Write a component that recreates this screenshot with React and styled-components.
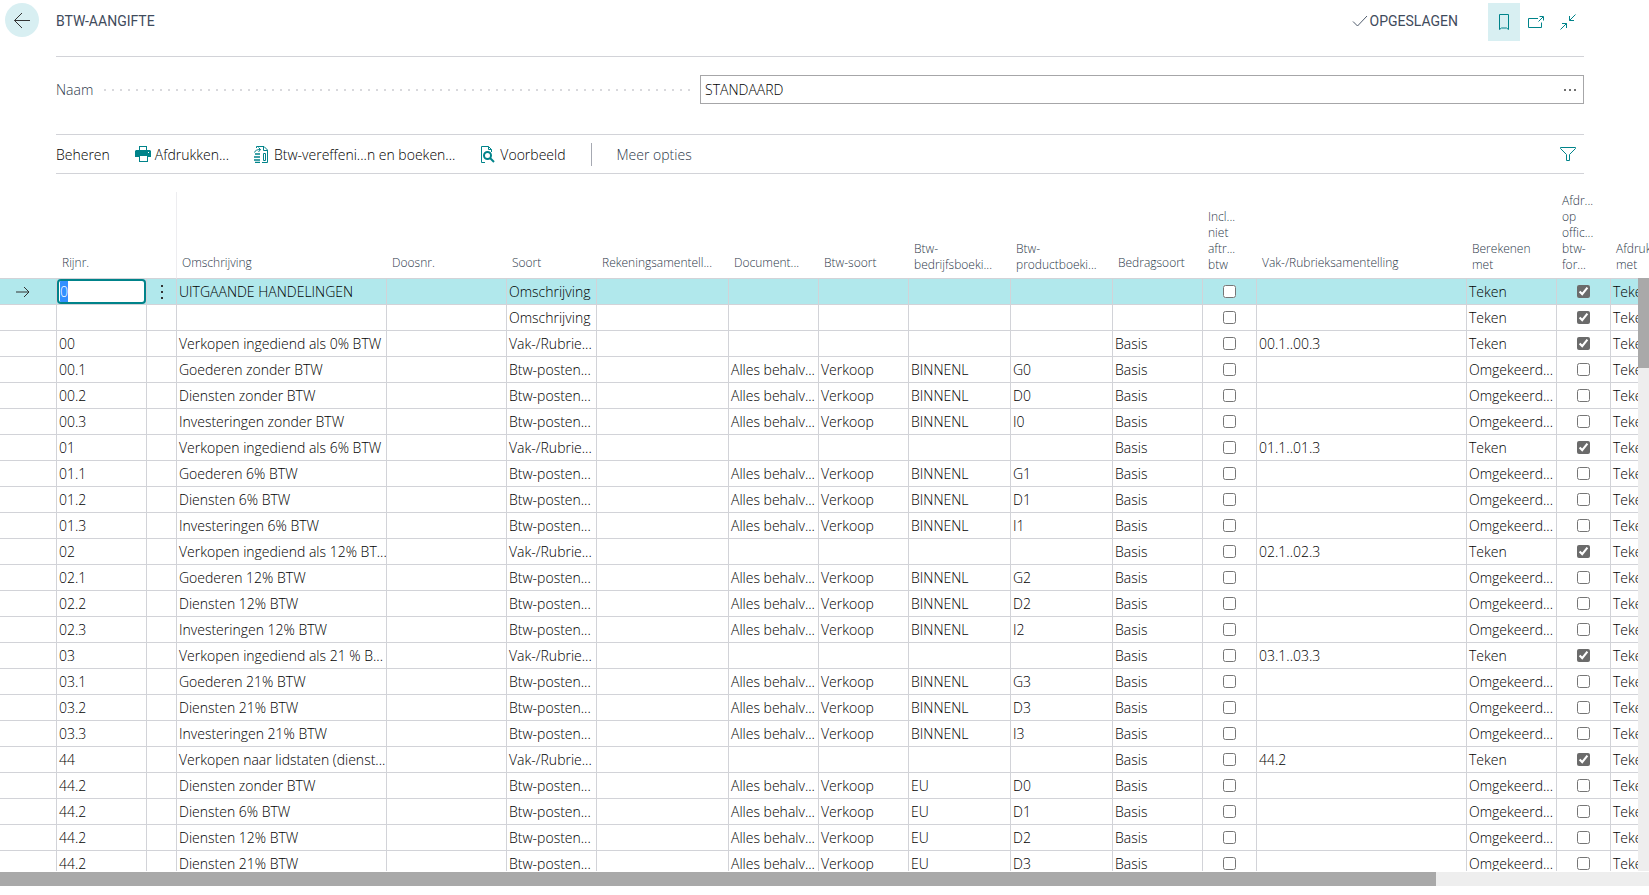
import React, { useEffect, useRef } from "react";
import styled, { createGlobalStyle, css } from "styled-components";

const columns = [
  { key: "nr", label: "Rijnr.", width: 90 },
  { key: "menu", label: "", width: 30 },
  { key: "description", label: "Omschrijving", width: 210 },
  { key: "box", label: "Doosnr.", width: 120 },
  { key: "type", label: "Soort", width: 90 },
  { key: "accounts", label: "Rekeningsamentell...", width: 132 },
  { key: "document", label: "Document...", width: 90 },
  { key: "vatType", label: "Btw-soort", width: 90 },
  { key: "busGroup", label: "Btw-\nbedrijfsboeki...", width: 102 },
  { key: "prodGroup", label: "Btw-\nproductboeki...", width: 102 },
  { key: "amountType", label: "Bedragsoort", width: 90 },
  { key: "incl", label: "Incl...\nniet\naftr...\nbtw", width: 54, check: true },
  { key: "totaling", label: "Vak-/Rubrieksamentelling", width: 210 },
  { key: "calc", label: "Berekenen\nmet", width: 90 },
  {
    key: "print",
    label: "Afdr...\nop\noffic...\nbtw-\nfor...",
    width: 54,
    check: true,
  },
  { key: "printWith", label: "Afdrukken\nmet", width: 90 },
];

const heading = (description) => ({
  nr: "",
  description,
  type: "Omschrijving",
  calc: "Teken",
  print: true,
});

const total = (nr, description, totaling) => ({
  nr,
  description,
  type: "Vak-/Rubrie...",
  amountType: "Basis",
  totaling,
  calc: "Teken",
  print: true,
});

const entry = (nr, description, prodGroup, busGroup = "BINNENL") => ({
  nr,
  description,
  type: "Btw-posten...",
  document: "Alles behalv...",
  vatType: "Verkoop",
  busGroup,
  prodGroup,
  amountType: "Basis",
  calc: "Omgekeerd...",
});

const rows = [
  { ...heading("UITGAANDE HANDELINGEN"), nr: "0" },
  heading(""),
  total("00", "Verkopen ingediend als 0% BTW", "00.1..00.3"),
  entry("00.1", "Goederen zonder BTW", "G0"),
  entry("00.2", "Diensten zonder BTW", "D0"),
  entry("00.3", "Investeringen zonder BTW", "I0"),
  total("01", "Verkopen ingediend als 6% BTW", "01.1..01.3"),
  entry("01.1", "Goederen 6% BTW", "G1"),
  entry("01.2", "Diensten 6% BTW", "D1"),
  entry("01.3", "Investeringen 6% BTW", "I1"),
  total("02", "Verkopen ingediend als 12% BT...", "02.1..02.3"),
  entry("02.1", "Goederen 12% BTW", "G2"),
  entry("02.2", "Diensten 12% BTW", "D2"),
  entry("02.3", "Investeringen 12% BTW", "I2"),
  total("03", "Verkopen ingediend als 21 % B...", "03.1..03.3"),
  entry("03.1", "Goederen 21% BTW", "G3"),
  entry("03.2", "Diensten 21% BTW", "D3"),
  entry("03.3", "Investeringen 21% BTW", "I3"),
  total("44", "Verkopen naar lidstaten (dienst...", "44.2"),
  entry("44.2", "Diensten zonder BTW", "D0", "EU"),
  entry("44.2", "Diensten 6% BTW", "D1", "EU"),
  entry("44.2", "Diensten 12% BTW", "D2", "EU"),
  entry("44.2", "Diensten 21% BTW", "D3", "EU"),
];

export default function App() {
  const activeCell = useRef(null);
  useEffect(() => {
    activeCell.current.focus();
    activeCell.current.select();
  }, []);

  return (
    <Page>
      <GlobalStyle />
      <Header>
        <BackButton type="button" aria-label="Terug">
          <BackIcon />
        </BackButton>
        <TitleBar>
          <Title>BTW-AANGIFTE</Title>
          <Saved>
            <SavedIcon />
            OPGESLAGEN
          </Saved>
          <IconButton type="button" aria-label="Bladwijzer" $active>
            <BookmarkIcon />
          </IconButton>
          <IconButton type="button" aria-label="Openen in nieuw venster">
            <PopOutIcon />
          </IconButton>
          <IconButton type="button" aria-label="Verkleinen">
            <CollapseIcon />
          </IconButton>
        </TitleBar>
      </Header>

      <Field>
        <FieldLabel htmlFor="name">
          Naam
          <Dots />
        </FieldLabel>
        <Lookup>
          <LookupInput id="name" defaultValue="STANDAARD" />
          <LookupButton type="button" aria-label="Opzoeken">
            <MoreIcon />
          </LookupButton>
        </Lookup>
      </Field>

      <Toolbar>
        <Action type="button">Beheren</Action>
        <Action type="button">
          <PrinterIcon />
          Afdrukken...
        </Action>
        <Action type="button">
          <PostIcon />
          Btw-vereffeni...n en boeken...
        </Action>
        <Action type="button">
          <PreviewIcon />
          Voorbeeld
        </Action>
        <Separator />
        <Action type="button" $muted>
          Meer opties
        </Action>
        <FilterButton type="button" aria-label="Filter">
          <FilterIcon />
        </FilterButton>
      </Toolbar>

      <GridArea>
        <Table>
          <colgroup>
            <Col $width={57} />
            {columns.map((column) => (
              <Col key={column.key} $width={column.width} />
            ))}
          </colgroup>
          <thead>
            <tr>
              <HeadCell />
              {columns.map((column) => (
                <HeadCell
                  key={column.key}
                  $wrapped={column.label.includes("\n")}
                  $divider={column.key === "menu"}
                >
                  {column.label}
                </HeadCell>
              ))}
            </tr>
          </thead>
          <tbody>
            {rows.map((row, index) => (
              <Row key={index} $selected={index === 0}>
                <MarkerCell>{index === 0 && <RowArrowIcon />}</MarkerCell>
                {columns.map((column) => {
                  if (column.check) {
                    return (
                      <CheckCell key={column.key}>
                        <Checkbox
                          type="checkbox"
                          aria-label={column.label}
                          defaultChecked={!!row[column.key]}
                        />
                      </CheckCell>
                    );
                  }
                  if (column.key === "nr" && index === 0) {
                    return (
                      <Cell key={column.key} $flush>
                        <CellInput
                          ref={activeCell}
                          aria-label="Rijnr."
                          defaultValue={row.nr}
                        />
                      </Cell>
                    );
                  }
                  if (column.key === "menu") {
                    return (
                      <Cell key={column.key} $flush>
                        {index === 0 && (
                          <RowMenu type="button" aria-label="Meer opties">
                            <RowMenuIcon />
                          </RowMenu>
                        )}
                      </Cell>
                    );
                  }
                  return (
                    <Cell key={column.key}>
                      {column.key === "printWith" ? "Teken" : row[column.key]}
                    </Cell>
                  );
                })}
              </Row>
            ))}
          </tbody>
        </Table>
        <VerticalTrack>
          <VerticalThumb />
        </VerticalTrack>
      </GridArea>
      <HorizontalTrack>
        <HorizontalThumb />
      </HorizontalTrack>
    </Page>
  );
}

const BackIcon = () => (
  <svg width="18" height="18" viewBox="0 0 18 18" fill="none" stroke="#333">
    <path d="M17 9.5H1.5M9 2L1.5 9.5L9 17" />
  </svg>
);

const SavedIcon = () => (
  <svg width="16" height="12" viewBox="0 0 16 12" fill="none" stroke="#505c6d">
    <path d="M1 6.5L5.5 11L15 1" />
  </svg>
);

const BookmarkIcon = () => (
  <svg width="16" height="16" viewBox="0 0 16 16" fill="none" stroke="#00838a">
    <path d="M3.5 .5H12.5V15.5L10.5 14H5.5L3.5 15.5Z" />
  </svg>
);

const PopOutIcon = () => (
  <svg width="16" height="16" viewBox="0 0 16 16" fill="none" stroke="#00838a">
    <path d="M10 4.5H.5V13.5H13.5V8.5" />
    <path d="M10.5 7.5L15 3M11.5 2.5H15.5V6.5" />
  </svg>
);

const CollapseIcon = () => (
  <svg width="16" height="16" viewBox="0 0 16 16" fill="none" stroke="#00838a">
    <path d="M15.5 .5L9.5 6.5M9.5 2V6.5H14" />
    <path d="M.5 15.5L6.5 9.5M2 9.5H6.5V14" />
  </svg>
);

const MoreIcon = () => (
  <svg width="12" height="2" viewBox="0 0 12 2" fill="#707070">
    <path d="M0 0H2V2H0ZM5 0H7V2H5ZM10 0H12V2H10Z" />
  </svg>
);

const PrinterIcon = () => (
  <svg width="16" height="16" viewBox="0 0 16 16" fill="#00838a">
    <path
      d="M4 0H12V4H15L16 5V11H13V16H4V11H0V5L1 4H4ZM5 1V4H11V1ZM5 10V15H12V10ZM13 6V7H14V6Z"
      fillRule="evenodd"
    />
  </svg>
);

const PostIcon = () => (
  <svg width="16" height="17" viewBox="0 0 16 17" fill="none" stroke="#00838a">
    <path d="M2.5 2V.5H10L13.5 4V16.5H8M9.5 .5V4.5H13.5M9.5 7.5H11.5V14.5H9.5Z" />
    <path d="M.5 6.5C1 4.500 3 3.5 6.5 3.5M4.500 1.500L6.500 3.500L4.500 6" />
    <path d="M1 8H6M0 11H6M0 14H6M1 16.500H6" strokeWidth="1.500" />
  </svg>
);

const PreviewIcon = () => (
  <svg width="16" height="17" viewBox="0 0 16 17" fill="none" stroke="#00838a">
    <path d="M5 16.5H1.5V.5H8.5L11.5 3.5V6M8.5 .5V3.5H11.5" />
    <circle cx="7.5" cy="9.5" r="3.5" strokeWidth="2" />
    <path d="M10 12L14 16" strokeWidth="2" />
  </svg>
);

const FilterIcon = () => (
  <svg width="16" height="16" viewBox="0 0 16 16" fill="none" stroke="#00838a">
    <path d="M.5 1.5H15.5V2.5L9.5 8.5V14.5H6.5V8.5L.5 2.5Z" />
  </svg>
);

const RowArrowIcon = () => (
  <svg width="14" height="12" viewBox="0 0 14 12" fill="none" stroke="#333">
    <path d="M0 6H13M8 1L13 6L8 11" />
  </svg>
);

const RowMenuIcon = () => (
  <svg width="2" height="14" viewBox="0 0 2 14" fill="#333">
    <path d="M0 0H2V2H0ZM0 6H2V8H0ZM0 12H2V14H0Z" />
  </svg>
);

const GlobalStyle = createGlobalStyle`
  * {
    box-sizing: border-box;
  }
  body {
    margin: 0;
    background: #fff;
    color: #000;
    font-family: "Open Sans", "Noto Sans", sans-serif;
    font-size: 14px;
    font-weight: 300;
    overflow: hidden;
  }
  button, input {
    font: inherit;
    color: inherit;
  }
  button {
    padding: 0;
    border: 0;
    background: none;
    cursor: pointer;
  }
  svg {
    display: block;
    flex: none;
  }
`;

const Page = styled.div`
  display: flex;
  flex-direction: column;
  height: 100vh;
  padding-bottom: 9px;
`;

const Header = styled.header`
  display: flex;
  padding: 3px 65px 0 5px;
`;

const BackButton = styled.button`
  display: flex;
  align-items: center;
  justify-content: center;
  width: 34px;
  height: 34px;
  border-radius: 50%;
  background: #d8eff2;
`;

const TitleBar = styled.div`
  display: flex;
  align-items: flex-start;
  flex: 1;
  height: 54px;
  margin-left: 17px;
  border-bottom: 1px solid #d2d3d8;
`;

const dinText = css`
  font-family: Roboto, sans-serif;
  font-size: 14px;
  font-weight: 400;
  line-height: 36px;
  color: #3f4b5c;
`;

const Title = styled.h1`
  ${dinText}
  flex: 1;
  margin: 0;
`;

const Saved = styled.div`
  ${dinText}
  display: flex;
  align-items: center;
  gap: 2px;
  margin-right: 30px;
`;

const IconButton = styled.button`
  display: flex;
  align-items: center;
  justify-content: center;
  width: 32px;
  height: 38px;
  background: ${(props) => (props.$active ? "#d8eff2" : "none")};
`;

const Field = styled.div`
  display: grid;
  grid-template-columns: 51fr 70fr;
  margin: 18px 65px 30px 56px;
`;

const FieldLabel = styled.label`
  display: flex;
  align-items: center;
  color: #2c3849;
`;

const Dots = styled.span`
  flex: 1;
  height: 2px;
  margin: 0 8px 0 11px;
  background: repeating-linear-gradient(
    to right,
    #d8d8dc 0 2px,
    transparent 2px 8px
  );
`;

const Lookup = styled.div`
  display: flex;
  height: 29px;
  border: 1px solid #a6a6a8;
`;

const LookupInput = styled.input`
  flex: 1;
  min-width: 0;
  padding: 0 4px;
  border: 0;
  outline: 0;
`;

const LookupButton = styled.button`
  display: flex;
  align-items: center;
  justify-content: center;
  width: 26px;
`;

const Toolbar = styled.div`
  display: flex;
  align-items: center;
  height: 40px;
  margin: 0 65px 0 56px;
  border-top: 1px solid #d2d3d8;
  border-bottom: 1px solid #d2d3d8;
`;

const Action = styled.button`
  display: flex;
  align-items: center;
  gap: 4px;
  margin-right: 25px;
  color: ${(props) => (props.$muted ? "#2c3849" : "inherit")};
  white-space: nowrap;
`;

const Separator = styled.div`
  width: 1px;
  height: 23px;
  margin-right: 25px;
  background: #a6a9b2;
`;

const FilterButton = styled.button`
  margin-left: auto;
  padding: 0 8px;
`;

const GridArea = styled.div`
  position: relative;
  flex: 1;
  min-height: 0;
  margin-top: 18px;
  overflow: hidden;
`;

const Table = styled.table`
  width: 1701px;
  table-layout: fixed;
  border-collapse: separate;
  border-spacing: 0;
`;

const Col = styled.col`
  width: ${(props) => props.$width}px;
`;

const HeadCell = styled.th`
  height: 87px;
  padding: 0 0 5px 5px;
  border-right: ${(props) => (props.$divider ? "1px solid #ededf0" : "0")};
  border-bottom: 1px solid #d2d3d8;
  color: #2c3849;
  font-size: 12px;
  font-weight: 300;
  line-height: ${(props) => (props.$wrapped ? "16px" : "20px")};
  text-align: left;
  vertical-align: bottom;
  white-space: pre;
`;

const Row = styled.tr`
  height: 26px;
  background: ${(props) => (props.$selected ? "#b1e8ec" : "#fff")};
`;

const Cell = styled.td`
  height: 26px;
  padding: ${(props) => (props.$flush ? "0" : "0 0 0 2px")};
  border-right: 1px solid #d2d3d8;
  border-bottom: 1px solid #d2d3d8;
  line-height: 25px;
  white-space: nowrap;
  overflow: hidden;
`;

const MarkerCell = styled(Cell)`
  padding-left: 16px;
`;

const CheckCell = styled(Cell)`
  padding: 0;
  text-align: center;
`;

const Checkbox = styled.input`
  display: block;
  width: 13px;
  height: 13px;
  margin: 0 auto;
  accent-color: #6b6b6b;
`;

const CellInput = styled.input`
  display: block;
  width: 100%;
  height: 25px;
  padding: 0 1px;
  border: 2px solid #00838a;
  border-radius: 4px;
  outline: 0;
  background: #fff;

  &::selection {
    background: #3390ff;
    color: #fff;
  }
`;

const RowMenu = styled.button`
  display: flex;
  align-items: center;
  justify-content: center;
  width: 100%;
  height: 25px;
`;

const VerticalTrack = styled.div`
  position: absolute;
  top: 86px;
  right: 0;
  bottom: 0;
  width: 11px;
  background: #eee;
`;

const VerticalThumb = styled.div`
  height: 90px;
  background: #a9a9a9;
`;

const HorizontalTrack = styled.div`
  height: 14px;
  margin-top: 1px;
  background: #eee;
`;

const HorizontalThumb = styled.div`
  width: 87.1%;
  height: 14px;
  background: #a9a9a9;
`;
